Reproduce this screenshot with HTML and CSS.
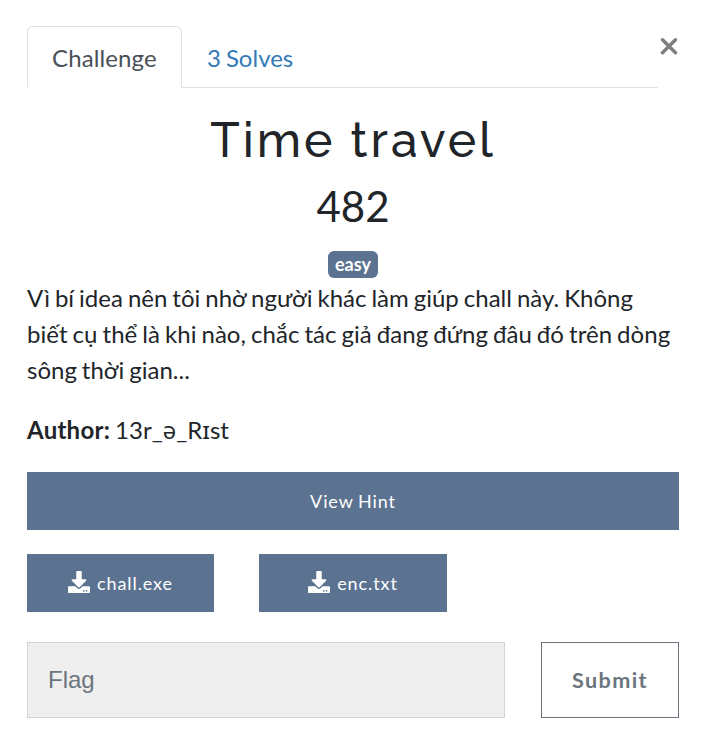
FILE: index.html
```html
<!DOCTYPE html>
<html lang="vi">
<head>
<meta charset="utf-8">
<title>Time travel</title>
<link rel="stylesheet" href="styles.css">
</head>
<body>
<main class="modal">
  <header class="top">
    <nav class="tabs"><a class="tab active">Challenge</a><a class="tab">3 Solves</a></nav>
    <button class="close" aria-label="Close"><svg width="18" height="18" viewBox="0 0 18 18"><path d="M2.500 2.700l13 13M15.500 2.700l-13 13" stroke="#7f7f7f" stroke-width="3.400" stroke-linecap="round" fill="none"/></svg></button>
  </header>
  <h2 class="title">Time travel</h2>
  <h3 class="value">482</h3>
  <div class="tags"><span class="badge">easy</span></div>
  <div class="desc">
    <p>Vì bí idea nên tôi nhờ người khác làm giúp chall này. Không<br><span class="line">biết cụ thể là khi nào, chắc tác giả đang đứng đâu đó trên dòng</span><br>sông thời gian...</p>
    <p class="author"><strong>Author:</strong> 13r_<span class="ipa">ə</span>_R<span class="ipa">ɪ</span>st</p>
  </div>
  <button class="btn hint">View Hint</button>
  <div class="files">
    <a class="btn file"><svg class="icon" viewBox="0 0 512 512"><path fill="currentColor" d="M216 0h80c13.300 0 24 10.700 24 24v168h87.700c17.800 0 26.700 21.500 14.100 34.100L269.700 378.300c-7.500 7.500-19.800 7.500-27.300 0L90.100 226.100c-12.600-12.600-3.700-34.100 14.100-34.100H192V24c0-13.300 10.700-24 24-24zm296 376v112c0 13.300-10.700 24-24 24H24c-13.300 0-24-10.700-24-24V376c0-13.300 10.700-24 24-24h146.700l49 49c20.100 20.100 52.500 20.100 72.600 0l49-49H488c13.300 0 24 10.700 24 24zm-124 88c0-11-9-20-20-20s-20 9-20 20 9 20 20 20 20-9 20-20zm64 0c0-11-9-20-20-20s-20 9-20 20 9 20 20 20 20-9 20-20z"/></svg>chall.exe</a>
    <a class="btn file wide"><svg class="icon" viewBox="0 0 512 512"><path fill="currentColor" d="M216 0h80c13.300 0 24 10.700 24 24v168h87.700c17.800 0 26.700 21.500 14.100 34.100L269.700 378.300c-7.500 7.500-19.800 7.500-27.300 0L90.100 226.100c-12.600-12.600-3.700-34.100 14.100-34.100H192V24c0-13.300 10.700-24 24-24zm296 376v112c0 13.300-10.700 24-24 24H24c-13.300 0-24-10.700-24-24V376c0-13.300 10.700-24 24-24h146.700l49 49c20.100 20.100 52.500 20.100 72.600 0l49-49H488c13.300 0 24 10.700 24 24zm-124 88c0-11-9-20-20-20s-20 9-20 20 9 20 20 20 20-9 20-20zm64 0c0-11-9-20-20-20s-20 9-20 20 9 20 20 20 20-9 20-20z"/></svg>enc.txt</a>
  </div>
  <form class="submit-row">
    <input class="flag" placeholder="Flag">
    <button class="submit" type="button">Submit</button>
  </form>
</main>
</body>
</html>
```
FILE: styles.css
```css
* { box-sizing: border-box; }
body { margin: 0; background: #fff; color: #212529; font: 24px/36px Lato, sans-serif; word-spacing: -1.15px; }
.modal { padding: 26px 28px 0 27px; }
.top { display: flex; height: 62px; }
.tabs { display: flex; width: 631px; border-bottom: 1px solid #dee2e6; }
.tab { height: 62px; padding: 14px 25px 0; color: #337ab7; }
.tab.active { width: 155px; padding: 13px 24px 0; border: 1px solid #dee2e6; border-bottom-color: #fff; border-radius: 6px 6px 0 0; background: #fff; color: #495057; letter-spacing: 0.12px; }
.close { margin: 11px 0 0 2px; padding: 0; width: 18px; height: 18px; border: 0; background: none; line-height: 0; }
.title { margin: 23px 0 0; height: 58px; text-align: center; font: 500 48px/58px Raleway, sans-serif; letter-spacing: 3px; word-spacing: 0; }
.value { margin: 12px 0 0; height: 50px; text-align: center; font-size: 42px; font-weight: 400; line-height: 50px; }
.tags { display: flex; justify-content: center; margin-top: 20px; }
.badge { height: 27px; padding: 0 7px; border-radius: 6px; background: #5b7290; color: #fff; font-size: 18px; font-weight: 700; line-height: 27px; }
.desc { margin-top: 2px; white-space: nowrap; }
.desc p { margin: 0 0 24px; }
.line { letter-spacing: 0.035px; }
.author strong { letter-spacing: 0.25px; }
.ipa { font-family: "Open Sans", "Noto Sans", sans-serif; line-height: 1; }
.btn { display: flex; align-items: center; justify-content: center; height: 58px; border: 0; padding: 0; background: #5b7290; color: #fff; font: 18px/27px Lato, sans-serif; letter-spacing: 0.9px; word-spacing: -0.8px; }
.hint { width: 652px; }
.files { display: flex; gap: 45px; margin-top: 24px; }
.file { width: 187px; }
.file.wide { width: 188px; }
.icon { width: 22px; height: 22px; margin-right: 7px; position: relative; top: -1px; }
.submit-row { display: flex; gap: 36px; margin: 30px 0 0; }
.flag { width: 478px; height: 76px; padding: 0 20px; border: 1px solid #ced4da; border-radius: 0; background: #efefef; font: 24px "Liberation Sans", sans-serif; }
.flag::placeholder { color: #6c757d; }
.submit { width: 138px; height: 76px; padding: 0; border: 1px solid #6c757d; background: #fff; color: #6c757d; font: 700 21.6px Lato, sans-serif; letter-spacing: 1.4px; }
```
